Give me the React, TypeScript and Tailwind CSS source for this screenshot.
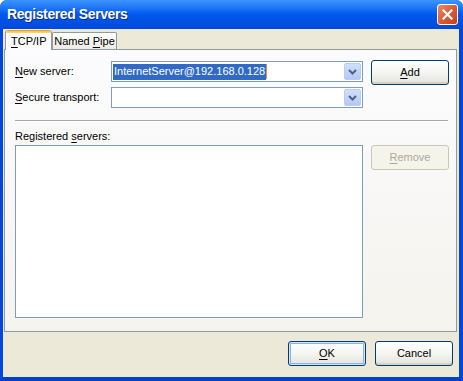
import { ReactNode } from 'react'

const ui = "font-['Liberation_Sans',Arial,sans-serif] text-[11px] leading-[13px] text-black"

const Key = ({ children }: { children: ReactNode }) => <span className="underline underline-offset-2">{children}</span>

const ComboBox = ({ children }: { children?: ReactNode }) => (
  <div className="flex h-[21px] w-[252px] items-center border border-[#7F9DB9] bg-white">
    <div className="flex flex-1 items-center pl-[1px]">{children}</div>
    <div className="mr-[1px] flex h-[17px] w-[17px] items-center justify-center rounded-[2px] border border-[#BACCF6] bg-gradient-to-b from-[#D2DEFC] to-[#B4C8F5]">
      <svg width="9" height="6" viewBox="0 0 9 6">
        <path d="M1 1 L4.5 4.5 L8 1" fill="none" stroke="#4D6185" strokeWidth="2" />
      </svg>
    </div>
  </div>
)

const Button = ({ children, variant = 'normal' }: { children: ReactNode; variant?: 'normal' | 'default' | 'disabled' }) => {
  if (variant === 'disabled')
    return (
      <div className="flex h-[25px] w-[78px] items-center justify-center rounded-[3px] border border-[#C9C7BA] bg-[#F5F4EA] text-[#ACA899]">
        <span>{children}</span>
      </div>
    )
  return (
    <div
      className={
        'flex h-[25px] w-[78px] items-center justify-center rounded-[3px] border border-[#003C74] bg-gradient-to-b from-white via-[#F5F5F2] to-[#E3E2DA] ' +
        (variant === 'default'
          ? 'shadow-[inset_0_0_0_1px_#CEE7FF,inset_0_0_0_2px_#8DB2E3]'
          : 'shadow-[inset_0_-2px_0_0_#D6D0C5]')
      }
    >
      <span>{children}</span>
    </div>
  )
}

const App = () => {
  return (
    <div className={`${ui} h-[381px] w-[463px] overflow-hidden bg-white`}>
      <div className="flex h-full w-full flex-col overflow-hidden rounded-t-[7px] bg-[#0054E3]">
        {/* title bar */}
        <div className="flex h-[29px] shrink-0 items-center justify-between bg-gradient-to-b from-[#3D95FF] via-[#0058EE] to-[#0049DA] pl-[7px] pr-[5px]">
          <span className="text-[14px] font-bold tracking-[-0.4px] text-white [text-shadow:1px_1px_0_#0A2A8C]">Registered Servers</span>
          <div className="flex h-[21px] w-[21px] items-center justify-center rounded-[3px] border border-white bg-gradient-to-br from-[#E88A6C] via-[#DD5A37] to-[#C2401E]">
            <svg width="11" height="11" viewBox="0 0 11 11">
              <path d="M1.5 1.5 L9.5 9.5 M9.5 1.5 L1.5 9.5" stroke="white" strokeWidth="2.2" strokeLinecap="square" />
            </svg>
          </div>
        </div>

        {/* frame */}
        <div className="flex flex-1 border-l-[3px] border-r-[4px] border-b-[4px] border-l-[#0048DC] border-r-[#0048DC] border-b-[#0041C8]">
          <div className="flex flex-1 flex-col bg-[#ECE9D8]">
            {/* tabs */}
            <div className="relative z-10 mt-[1px] flex h-[20px] items-end whitespace-nowrap pl-[2px]">
              <div className="flex h-[20px] w-[47px] flex-col overflow-hidden rounded-t-[3px] border-x border-[#919B9C] bg-[#FCFCFE]">
                <div className="h-[3px] shrink-0 bg-gradient-to-b from-[#E68B2C] via-[#FFC83C] to-[#FFD880]" />
                <div className="pl-[5px] pt-[2px]">
                  <Key>T</Key>CP/IP
                </div>
              </div>
              <div className="mb-[1px] flex h-[17px] w-[65px] items-center justify-center rounded-t-[2px] border-x border-t border-[#919B9C] bg-gradient-to-b from-white to-[#ECEBE6]">
                <span className="whitespace-nowrap">
                  Named <Key>P</Key>ipe
                </span>
              </div>
            </div>

            {/* panel */}
            <div className="-mt-px ml-[1px] mr-[2px] flex h-[283px] flex-col border border-[#919B9C] bg-gradient-to-b from-[#FCFCFE] to-[#F4F3EE] pl-[10px] pr-[7px] pt-[10px]">
              <div className="flex gap-[8px]">
                <div className="flex flex-col">
                  <div className="mt-[1px] flex items-center">
                    <div className="w-[96px]">
                      <Key>N</Key>ew server:
                    </div>
                    <ComboBox>
                      <span className="flex h-[16px] items-center bg-[#316AC5] pl-[1px] pr-[1px] text-white">InternetServer@192.168.0.128</span>
                      <span className="h-[15px] w-px bg-[#CE9539]" />
                    </ComboBox>
                  </div>
                  <div className="mt-[5px] flex items-center">
                    <div className="w-[96px]">
                      <Key>S</Key>ecure transport:
                    </div>
                    <ComboBox />
                  </div>
                </div>
                <Button>
                  <Key>A</Key>dd
                </Button>
              </div>

              <div className="mr-[1px] mt-[12px] h-px bg-[#ACA899]" />
              <div className="mr-[1px] h-px bg-white" />

              <div className="flex gap-[8px]">
                <div className="flex flex-col">
                  <div className="mt-[8px]">
                    Registered <Key>s</Key>ervers:
                  </div>
                  <div className="mt-[2px] h-[173px] w-[348px] border border-[#7F9DB9] bg-white" />
                </div>
                <div className="mt-[23px]">
                  <Button variant="disabled">
                    <Key>R</Key>emove
                  </Button>
                </div>
              </div>
            </div>

            {/* dialog buttons */}
            <div className="flex justify-end gap-[9px] pr-[6px] pt-[9px]">
              <Button variant="default">
                <Key>O</Key>K
              </Button>
              <Button>Cancel</Button>
            </div>
          </div>
        </div>
      </div>
    </div>
  )
}

export default App
